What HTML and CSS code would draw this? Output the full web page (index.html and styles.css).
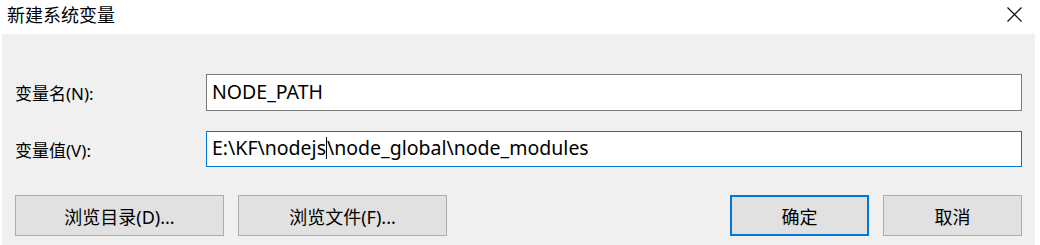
FILE: index.html
```html
<!DOCTYPE html>
<html lang="zh-CN">
<head>
    <meta charset="UTF-8">
    <title>新建系统变量</title>
    <link rel="stylesheet" href="styles.css">
</head>
<body>
    <div class="titlebar">
        <span class="title">新建系统变量</span>
        <svg class="close" width="15" height="15" viewBox="0 0 15 15">
            <path d="M0.5 0.5 L14.5 14.5 M14.5 0.5 L0.5 14.5" stroke="#111" stroke-width="1.2" fill="none"/>
        </svg>
    </div>

    <div class="panel">
        <div class="field">
            <label class="field-label">变量名(N):</label>
            <div class="field-box">NODE_PATH</div>
        </div>

        <div class="field">
            <label class="field-label">变量值(V):</label>
            <div class="field-box focused">E:\KF\nodejs<span class="caret"></span>\node_global\node_modules</div>
        </div>

        <div class="buttons">
            <button class="btn wide">浏览目录(D)...</button>
            <button class="btn wide">浏览文件(F)...</button>
            <div class="spacer"></div>
            <button class="btn default">确定</button>
            <button class="btn">取消</button>
        </div>
    </div>
</body>
</html>
```

FILE: styles.css
```css
body {
    margin: 0;
    background: #fff;
    font-family: "Noto Sans", "Noto Sans CJK SC", sans-serif;
    color: #000;
}
.titlebar {
    height: 34px;
    display: flex;
    justify-content: space-between;
    align-items: flex-start;
    padding: 0 18px 0 7px;
}
.title {
    font-size: 18px;
    line-height: 30px;
}
.close {
    margin-top: 7px;
}
.panel {
    margin-left: 2px;
    width: 1033px;
    height: 211px;
    box-sizing: border-box;
    background: #f0f0f0;
    padding: 40px 13px 0 13px;
}
.field {
    display: flex;
    align-items: center;
    margin-bottom: 20px;
}
.field-label {
    width: 191px;
    font-size: 17px;
}
.field-box {
    flex: 1;
    height: 37px;
    box-sizing: border-box;
    border: 1px solid #7a7a7a;
    background: #fff;
    font-size: 19.5px;
    line-height: 33px;
    padding-left: 5px;
    white-space: nowrap;
}
.field-box.focused {
    height: 36px;
    border-color: #0078d7;
    line-height: 32px;
}
.caret {
    display: inline-block;
    width: 0;
    height: 22px;
    border-left: 1px solid #000;
    vertical-align: -4px;
}
.buttons {
    display: flex;
    gap: 14px;
    margin-top: 28px;
}
.spacer {
    flex: 1;
}
.btn {
    width: 139px;
    height: 41px;
    background: #e1e1e1;
    border: 1px solid #adadad;
    font-family: inherit;
    font-size: 18px;
    color: #000;
    padding: 0;
}
.btn.wide {
    width: 209px;
}
.btn.default {
    border: 2px solid #0078d7;
}
```
